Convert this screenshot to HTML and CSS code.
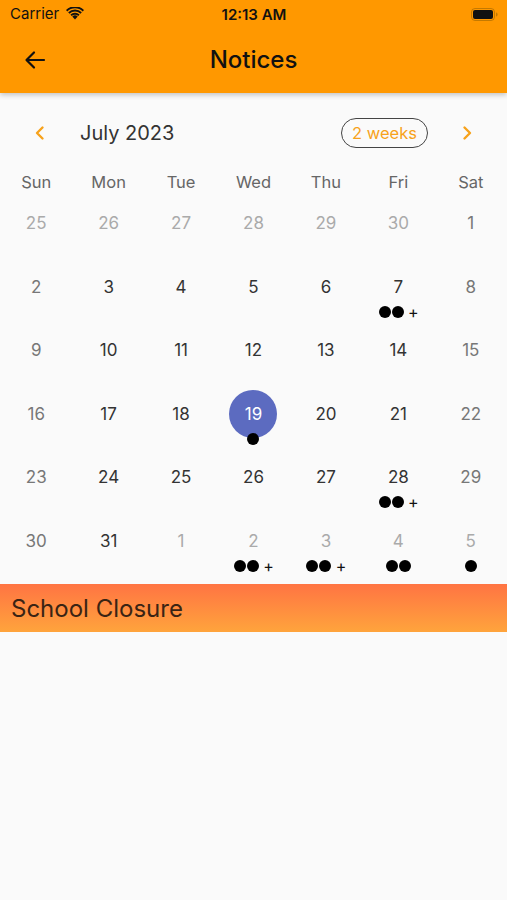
FILE: index.html
```html
<!DOCTYPE html>
<html lang="en">
<head>
    <meta charset="UTF-8">
    <meta name="viewport" content="width=device-width, initial-scale=1.0">
    <title>Notices</title>
    <link rel="stylesheet" href="styles.css">
</head>
<body>
    <div class="appbar">
        <div class="status">
            <div class="status-left">
                <span>Carrier</span>
                <svg class="wifi" width="18" height="13" viewBox="0 0 18 13">
                    <path d="M9 12.5 L6.3 9.6 A3.8 3.8 0 0 1 11.7 9.6 Z" fill="#111"/>
                    <path d="M4.4 7.6 A6.5 6.5 0 0 1 13.6 7.6 L12.3 9 A4.7 4.7 0 0 0 5.7 9 Z" fill="#111"/>
                    <path d="M2.2 5.3 A9.6 9.6 0 0 1 15.8 5.3 L14.5 6.7 A7.7 7.7 0 0 0 3.5 6.7 Z" fill="#111"/>
                    <path d="M0 3 A12.7 12.7 0 0 1 18 3 L16.7 4.4 A10.8 10.8 0 0 0 1.3 4.4 Z" fill="#111"/>
                </svg>
            </div>
            <div class="status-time">12:13 AM</div>
            <div class="status-right">
                <svg width="27" height="13" viewBox="0 0 27 13">
                    <rect x="0.5" y="0.5" width="23" height="12" rx="3.5" fill="none" stroke="#8a5a00" stroke-opacity="0.5"/>
                    <rect x="2" y="2" width="20" height="9" rx="2" fill="#111"/>
                    <path d="M25 4.5 a1.6 2 0 0 1 0 4 z" fill="#8a5a00" fill-opacity="0.5"/>
                </svg>
            </div>
        </div>
        <div class="toolbar">
            <svg class="back" width="22" height="20" viewBox="0 0 22 20">
                <path d="M20 10 H3 M10 2.5 L2.5 10 L10 17.5" fill="none" stroke="#111" stroke-width="2.2" stroke-linecap="round" stroke-linejoin="round"/>
            </svg>
            <h1>Notices</h1>
        </div>
    </div>

    <div class="calendar">
        <div class="cal-header">
            <svg class="chev" width="12" height="16" viewBox="0 0 12 16">
                <path d="M8.5 2.5 L3 8 L8.5 13.5" fill="none" stroke="#f7a21b" stroke-width="2.4" stroke-linecap="round" stroke-linejoin="round"/>
            </svg>
            <span class="month">July 2023</span>
            <span class="format-btn">2 weeks</span>
            <svg class="chev" width="12" height="16" viewBox="0 0 12 16">
                <path d="M3.5 2.5 L9 8 L3.5 13.5" fill="none" stroke="#f7a21b" stroke-width="2.4" stroke-linecap="round" stroke-linejoin="round"/>
            </svg>
        </div>
        <div class="dow">
            <span>Sun</span><span>Mon</span><span>Tue</span><span>Wed</span><span>Thu</span><span>Fri</span><span>Sat</span>
        </div>
        <div class="days" id="days"></div>
    </div>

    <div class="notice">School Closure</div>

    <script>
        const cells = [
            [25,'out'],[26,'out'],[27,'out'],[28,'out'],[29,'out'],[30,'out'],[1,'we'],
            [2,'we'],[3],[4],[5],[6],[7,'',3],[8,'we'],
            [9,'we'],[10],[11],[12],[13],[14],[15,'we'],
            [16,'we'],[17],[18],[19,'sel',1],[20],[21],[22,'we'],
            [23,'we'],[24],[25],[26],[27],[28,'',3],[29,'we'],
            [30,'we'],[31],[1,'out'],[2,'out',3],[3,'out',3],[4,'out',2],[5,'out',1]
        ];
        const days = document.getElementById('days');
        cells.forEach(c => {
            const cell = document.createElement('div');
            cell.className = 'day ' + (c[1] || '');
            let marks = '';
            const n = c[2] || 0;
            for (let i = 0; i < Math.min(n, 2); i++) marks += '<i class="dot"></i>';
            if (n > 2) marks += '<b class="more">+</b>';
            cell.innerHTML = `<span class="num">${c[0]}</span><div class="marks">${marks}</div>`;
            days.appendChild(cell);
        });
    </script>
</body>
</html>
```

FILE: styles.css
```css
body {
    margin: 0;
    padding: 0;
    background-color: #fafafa;
    font-family: Inter, "Noto Sans", sans-serif;
    width: 507px;
    height: 900px;
    overflow: hidden;
}
.appbar {
    background-color: #ff9800;
    height: 93px;
    box-shadow: 0 2px 5px rgba(0, 0, 0, 0.22);
    position: relative;
    z-index: 1;
}
.status {
    height: 28px;
    display: flex;
    align-items: center;
    justify-content: space-between;
    padding: 0 9px 0 10px;
    font-size: 15px;
    color: #111;
}
.status-left {
    display: flex;
    align-items: center;
    gap: 7px;
    width: 110px;
    margin-top: -1px;
}
.status-time {
    font-weight: 600;
    font-size: 15px;
}
.status-right {
    width: 110px;
    display: flex;
    justify-content: flex-end;
}
.toolbar {
    height: 65px;
    display: flex;
    align-items: center;
    position: relative;
}
.back {
    margin-left: 24px;
    margin-top: -2px;
}
.toolbar h1 {
    position: absolute;
    left: 0;
    right: 0;
    margin: 0;
    margin-top: -2px;
    text-align: center;
    font-size: 24px;
    font-weight: 500;
    color: #111;
}
.calendar {
    padding-top: 24px;
}
.cal-header {
    display: flex;
    align-items: center;
    height: 32px;
    padding: 0 34px 0 34px;
}
.month {
    font-size: 20px;
    color: #333;
    margin-left: 34px;
    flex: 1;
}
.format-btn {
    font-size: 16.5px;
    color: #f7a21b;
    border: 1.5px solid #444;
    border-radius: 16px;
    padding: 4px 10px;
    margin-right: 33px;
}
.dow {
    display: grid;
    grid-template-columns: repeat(7, 1fr);
    margin-top: 17px;
    height: 32px;
    align-items: center;
}
.dow span {
    text-align: center;
    font-size: 16.5px;
    color: #666;
}
.days {
    display: grid;
    grid-template-columns: repeat(7, 1fr);
    grid-auto-rows: 63.5px;
    margin-top: 8px;
}
.day {
    position: relative;
    display: flex;
    flex-direction: column;
    align-items: center;
    padding-top: 6px;
}
.num {
    position: relative;
    z-index: 1;
    font-size: 17px;
    line-height: 22px;
    color: #333;
}
.day.we .num {
    color: #777;
}
.day.out .num {
    color: #aaa;
}
.day.sel::before {
    content: "";
    position: absolute;
    top: -7px;
    left: 50%;
    width: 48px;
    height: 48px;
    margin-left: -24px;
    border-radius: 50%;
    background-color: #5c6bc0;
}
.day.sel .num {
    color: #fff;
}
.marks {
    position: relative;
    z-index: 2;
    display: flex;
    align-items: center;
    height: 12px;
    margin-top: 8px;
}
.dot {
    width: 12px;
    height: 12px;
    border-radius: 50%;
    background-color: #000;
    margin: 0 0.5px;
}
.more {
    font-weight: normal;
    font-size: 16px;
    line-height: 12px;
    color: #111;
    margin-left: 4px;
}
.notice {
    margin-top: -3px;
    height: 48px;
    display: flex;
    align-items: center;
    padding-left: 11px;
    font-size: 24px;
    color: #3a2414;
    background: linear-gradient(to bottom, #ff7443, #ffa43c);
}
```
